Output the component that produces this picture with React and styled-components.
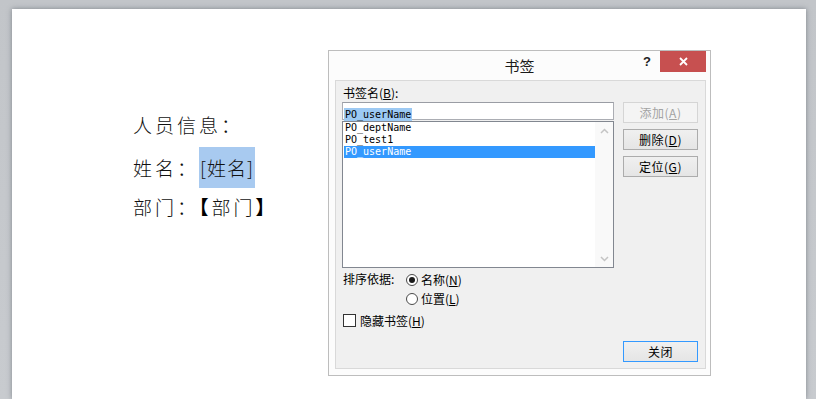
import React from "react";
import styled, { createGlobalStyle } from "styled-components";

const GlobalStyle = createGlobalStyle`
  html, body {
    margin: 0;
    padding: 0;
  }
  body {
    width: 816px;
    height: 399px;
    overflow: hidden;
    background: linear-gradient(#c2c5c9, #c8cbcf);
    font-family: "Noto Sans CJK SC", sans-serif;
  }
`;

const Workspace = styled.div`
  position: relative;
  height: 399px;
  padding: 9px 10px 0 12px;
  box-sizing: border-box;
`;

const Page = styled.div`
  height: 100%;
  box-sizing: border-box;
  background: #fff;
  box-shadow: 0 0 5px rgba(70, 78, 88, 0.55);
  padding: 97px 0 0 121px;
`;

const DocLine = styled.div`
  height: 41px;
  line-height: 41px;
  font-family: "Liberation Serif", "Noto Sans CJK SC", serif;
  font-size: 19px;
  font-weight: 300;
  letter-spacing: 3px;
  color: #111;
  white-space: nowrap;
`;

const Highlight = styled.span`
  display: inline-block;
  width: 56px;
  height: 41px;
  padding-left: 1px;
  box-sizing: border-box;
  letter-spacing: 1px;
  background: #a8caf0;
  font-family: "Noto Sans CJK SC", sans-serif;
`;

const Bracket = styled.span`
  font-weight: 700;
  color: #000;
`;

/* dialog window floating over the document */
const Dialog = styled.div`
  position: absolute;
  left: 328px;
  top: 50px;
  width: 383px;
  height: 326px;
  box-sizing: border-box;
  border: 1px solid #bdbdbd;
  background: #fcfcfc;
  display: flex;
  flex-direction: column;
  font-size: 12px;
  color: #000;
`;

const TitleBar = styled.div`
  position: relative;
  height: 29px;
  flex: none;
`;

const Title = styled.div`
  text-align: center;
  line-height: 29px;
  font-size: 15px;
  color: #1a1a1a;
`;

const WindowControls = styled.div`
  position: absolute;
  top: 0;
  right: 4px;
  display: flex;
`;

const HelpButton = styled.div`
  width: 26px;
  height: 20px;
  display: flex;
  align-items: center;
  justify-content: center;
  font-family: "Liberation Sans", sans-serif;
  font-weight: 700;
  font-size: 13px;
  color: #222;
`;

const CloseButton = styled.div`
  width: 46px;
  height: 21px;
  background: #c75050;
  display: flex;
  align-items: center;
  justify-content: center;
`;

const Panel = styled.div`
  flex: 1;
  margin: 0 4px 6px 6px;
  border: 1px solid #d9d9d9;
  background: #f0f0f0;
  padding: 4px 7px 0 6px;
  display: flex;
  flex-direction: column;
`;

const Label = styled.div`
  height: 17px;
  line-height: 16px;
  padding-left: 1px;
`;

const MainRow = styled.div`
  display: flex;
  gap: 9px;
`;

const LeftColumn = styled.div`
  width: 272px;
  display: flex;
  flex-direction: column;
  gap: 1px;
`;

const NameInput = styled.div`
  height: 18px;
  box-sizing: border-box;
  border: 1px solid #abadb3;
  border-top-color: #9a9da4;
  background: #fff;
  padding: 1px 0 0 1px;
`;

const SelectedText = styled.span`
  display: inline-block;
  height: 13px;
  line-height: 13px;
  padding: 0 1px;
  background: #9cc9f3;
  font-family: "DejaVu Sans Mono", monospace;
  font-size: 10px;
`;

const ListBox = styled.div`
  height: 147px;
  box-sizing: border-box;
  border: 1px solid #828790;
  background: #fff;
  display: flex;
`;

const Items = styled.div`
  flex: 1;
  padding-left: 1px;
`;

const ListItem = styled.div`
  height: 12px;
  line-height: 12px;
  padding-left: 1px;
  font-family: "DejaVu Sans Mono", monospace;
  font-size: 10px;
  color: ${(p) => (p.selected ? "#fff" : "#000")};
  background: ${(p) => (p.selected ? "#3399ff" : "transparent")};
`;

const ScrollTrack = styled.div`
  width: 18px;
  background: #f9f9f9;
  display: flex;
  flex-direction: column;
  justify-content: space-between;
  align-items: center;
  padding: 6px 0 5px;
`;

const ButtonColumn = styled.div`
  width: 75px;
  display: flex;
  flex-direction: column;
  gap: 6px;
`;

const Button = styled.div`
  height: 21px;
  box-sizing: border-box;
  border: 1px solid ${(p) => (p.disabled ? "#d5d5d5" : p.primary ? "#3399ff" : "#acacac")};
  background: ${(p) => (p.disabled ? "#f4f4f4" : "linear-gradient(#f0f0f0, #e5e5e5)")};
  color: ${(p) => (p.disabled ? "#a3a3a3" : "#000")};
  display: flex;
  align-items: center;
  justify-content: center;
  line-height: 1;
  letter-spacing: 0.5px;
`;

const SortRow = styled.div`
  display: flex;
  margin-top: 2px;
`;

const SortLabel = styled.div`
  width: 63px;
  height: 19px;
  line-height: 17px;
  padding-left: 1px;
`;

const RadioGroup = styled.div`
  display: flex;
  flex-direction: column;
`;

const Option = styled.div`
  height: 19px;
  display: flex;
  align-items: center;
  gap: 3px;
`;

const RadioCircle = styled.span`
  width: 12px;
  height: 12px;
  box-sizing: border-box;
  border: 1px solid #4a4a4a;
  border-radius: 50%;
  background: #fff;
  display: flex;
  align-items: center;
  justify-content: center;
  &::after {
    content: "";
    width: 6px;
    height: 6px;
    border-radius: 50%;
    background: ${(p) => (p.checked ? "#1a1a1a" : "transparent")};
  }
`;

const CheckRow = styled(Option)`
  margin-top: 3px;
  padding-left: 1px;
  gap: 4px;
`;

const CheckBox = styled.span`
  width: 13px;
  height: 13px;
  box-sizing: border-box;
  border: 1px solid #333;
  background: #fff;
`;

const Footer = styled.div`
  display: flex;
  justify-content: flex-end;
  margin-top: 11px;
`;

const FooterButton = styled(Button)`
  width: 75px;
`;

const Chevron = ({ up }) => (
  <svg width="9" height="6" viewBox="0 0 9 6">
    <path
      d={up ? "M1 5 L4.5 1.5 L8 5" : "M1 1 L4.5 4.5 L8 1"}
      fill="none"
      stroke="#c4c4c4"
      strokeWidth="1.5"
    />
  </svg>
);

const bookmarks = ["PO_deptName", "PO_test1", "PO_userName"];

export default function App() {
  return (
    <>
      <GlobalStyle />
      <Workspace>
        <Page>
          <DocLine>人员信息：</DocLine>
          <DocLine>
            姓名：<Highlight>[姓名]</Highlight>
          </DocLine>
          <DocLine>
            部门：<Bracket>【</Bracket>部门<Bracket>】</Bracket>
          </DocLine>
        </Page>

        <Dialog>
          <TitleBar>
            <Title>书签</Title>
            <WindowControls>
              <HelpButton>?</HelpButton>
              <CloseButton>
                <svg width="9" height="9" viewBox="0 0 9 9">
                  <path d="M1 1 L8 8 M8 1 L1 8" stroke="#fff" strokeWidth="1.8" />
                </svg>
              </CloseButton>
            </WindowControls>
          </TitleBar>

          <Panel>
            <Label>
              书签名(<u>B</u>):
            </Label>
            <MainRow>
              <LeftColumn>
                <NameInput>
                  <SelectedText>PO_userName</SelectedText>
                </NameInput>
                <ListBox>
                  <Items>
                    {bookmarks.map((name) => (
                      <ListItem key={name} selected={name === "PO_userName"}>
                        {name}
                      </ListItem>
                    ))}
                  </Items>
                  <ScrollTrack>
                    <Chevron up />
                    <Chevron />
                  </ScrollTrack>
                </ListBox>
              </LeftColumn>
              <ButtonColumn>
                <Button disabled>
                  <span>添加(<u>A</u>)</span>
                </Button>
                <Button>
                  <span>删除(<u>D</u>)</span>
                </Button>
                <Button>
                  <span>定位(<u>G</u>)</span>
                </Button>
              </ButtonColumn>
            </MainRow>

            <SortRow>
              <SortLabel>排序依据:</SortLabel>
              <RadioGroup>
                <Option>
                  <RadioCircle checked />
                  <span>名称(<u>N</u>)</span>
                </Option>
                <Option>
                  <RadioCircle />
                  <span>位置(<u>L</u>)</span>
                </Option>
              </RadioGroup>
            </SortRow>

            <CheckRow>
              <CheckBox />
              <span>隐藏书签(<u>H</u>)</span>
            </CheckRow>

            <Footer>
              <FooterButton primary>关闭</FooterButton>
            </Footer>
          </Panel>
        </Dialog>
      </Workspace>
    </>
  );
}
